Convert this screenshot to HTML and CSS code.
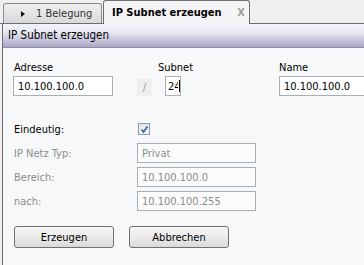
FILE: index.html
```html
<!DOCTYPE html>
<html lang="de">
<head>
    <meta charset="UTF-8">
    <title>IP Subnet erzeugen</title>
    <link rel="stylesheet" href="styles.css">
</head>
<body>
    <div class="tabs">
        <div class="tab">
            <span class="arrow"></span>1 Belegung
        </div>
        <div class="tab active">
            IP Subnet erzeugen <span class="close">X</span>
        </div>
    </div>

    <div class="panel">
        <div class="panel-head">IP Subnet erzeugen</div>
        <div class="panel-body">
            <div class="top-row">
                <div class="field addr">
                    <label for="adresse">Adresse</label>
                    <input type="text" id="adresse" value="10.100.100.0">
                </div>
                <div class="slash">/</div>
                <div class="field subnet">
                    <label for="subnet">Subnet</label>
                    <div class="subnet-box"><input type="text" id="subnet" value="24"><span class="caret"></span></div>
                </div>
                <div class="field name">
                    <label for="name">Name</label>
                    <input type="text" id="name" value="10.100.100.0">
                </div>
            </div>

            <div class="details">
                <span class="lbl">Eindeutig:</span>
                <span class="check">
                    <svg width="9" height="9" viewBox="0 0 9 9"><path d="M1.5 4.5 L3.5 7 L7.5 1.5" fill="none" stroke="#3f67a8" stroke-width="1.8"/></svg>
                </span>

                <span class="lbl off">IP Netz Typ:</span>
                <input type="text" class="ro" value="Privat" disabled>

                <span class="lbl off">Bereich:</span>
                <input type="text" class="ro" value="10.100.100.0" disabled>

                <span class="lbl off">nach:</span>
                <input type="text" class="ro" value="10.100.100.255" disabled>
            </div>

            <div class="buttons">
                <button type="button">Erzeugen</button>
                <button type="button">Abbrechen</button>
            </div>
        </div>
    </div>
</body>
</html>
```

FILE: styles.css
```css
body {
    margin: 0;
    background: #f0f0f2;
    font-family: "DejaVu Sans Condensed", "Liberation Sans", sans-serif;
    font-size: 11px;
    color: #000;
    overflow: hidden;
    height: 265px;
}
.tabs {
    display: flex;
    align-items: flex-end;
    height: 23px;
    padding-left: 3px;
    border-bottom: 1px solid #6e6e6e;
}
.tab {
    display: flex;
    align-items: center;
    box-sizing: border-box;
    height: 20px;
    width: 99px;
    padding-left: 17px;
    border: 1px solid #8e8e8e;
    border-bottom: none;
    border-radius: 3px 3px 0 0;
    background: linear-gradient(#eeeeee, #d9d9d9);
    color: #333;
}
.arrow {
    width: 0;
    height: 0;
    border-top: 3px solid transparent;
    border-bottom: 3px solid transparent;
    border-left: 4px solid #111;
    margin-right: 11px;
}
.tab.active {
    height: 24px;
    width: 147px;
    margin-left: 1px;
    margin-bottom: -1px;
    padding-left: 8px;
    border-color: #6e6e6e;
    background: #f5f5f7;
    color: #000;
    font-weight: bold;
    font-size: 11px;
    justify-content: space-between;
    padding-right: 4px;
}
.close {
    color: #a0a0a0;
    font-size: 11px;
}
.panel {
    margin-left: 2px;
    border-left: 1px solid #6e6e6e;
}
.panel-head {
    height: 23px;
    line-height: 23px;
    padding-left: 5px;
    font-size: 11.5px;
    background: linear-gradient(#f2f2fa, #e8e8f4 35%, #aaa7c5);
    border-bottom: 1px solid #8d8aa8;
}
.panel-body {
    background: #f7f8f9;
    height: 204px;
    padding: 13px 0 0 10px;
    overflow: hidden;
}
label, .lbl {
    display: block;
    line-height: 13px;
}
input[type="text"] {
    box-sizing: border-box;
    height: 20px;
    border: 1px solid #a6aeb8;
    background: #fff;
    font-family: inherit;
    font-size: 11px;
    color: #000;
    padding: 0 4px;
    margin: 0;
}
.top-row {
    display: flex;
}
.top-row > div {
    flex-shrink: 0;
}
.field label {
    margin-bottom: 2px;
    padding-left: 1px;
}
.addr input {
    width: 100px;
}
.slash {
    align-self: flex-end;
    width: 15px;
    height: 17px;
    margin-left: 24px;
    background: #efeff1;
    color: #9a9a9a;
    line-height: 17px;
    text-align: center;
}
.subnet {
    margin-left: 5px;
    width: 26px;
}
.subnet-box {
    position: relative;
    margin-left: 8px;
}
.subnet input {
    width: 16px;
    padding: 0 2px;
}
.caret {
    position: absolute;
    left: 14px;
    top: 4px;
    width: 1px;
    height: 12px;
    background: #000;
}
.name {
    margin-left: 96px;
}
.name label {
    padding-left: 0;
}
.name input {
    width: 100px;
}
.details {
    display: grid;
    grid-template-columns: 124px 119px;
    grid-auto-rows: 20px;
    row-gap: 4px;
    align-items: center;
    margin-top: 23px;
}
.lbl {
    padding-left: 1px;
}
.lbl.off {
    color: #8c8c8c;
}
.check {
    box-sizing: border-box;
    width: 12px;
    height: 12px;
    margin-left: 1px;
    border: 1px solid #8f99a6;
    background: linear-gradient(#e4e6ea, #f6f7f8);
    display: flex;
    align-items: center;
    justify-content: center;
}
.check svg {
    display: block;
}
input.ro {
    width: 119px;
    height: 20px;
    color: #8c8c8c;
    background: #fbfbfc;
}
.buttons {
    display: flex;
    gap: 15px;
    margin-top: 15px;
    padding-left: 1px;
}
button {
    width: 100px;
    height: 22px;
    border: 1px solid #707070;
    border-radius: 3px;
    background: linear-gradient(#f7f7f7, #ebebeb 50%, #dadada);
    font-family: inherit;
    font-size: 11px;
    color: #000;
    padding: 0;
}
```
